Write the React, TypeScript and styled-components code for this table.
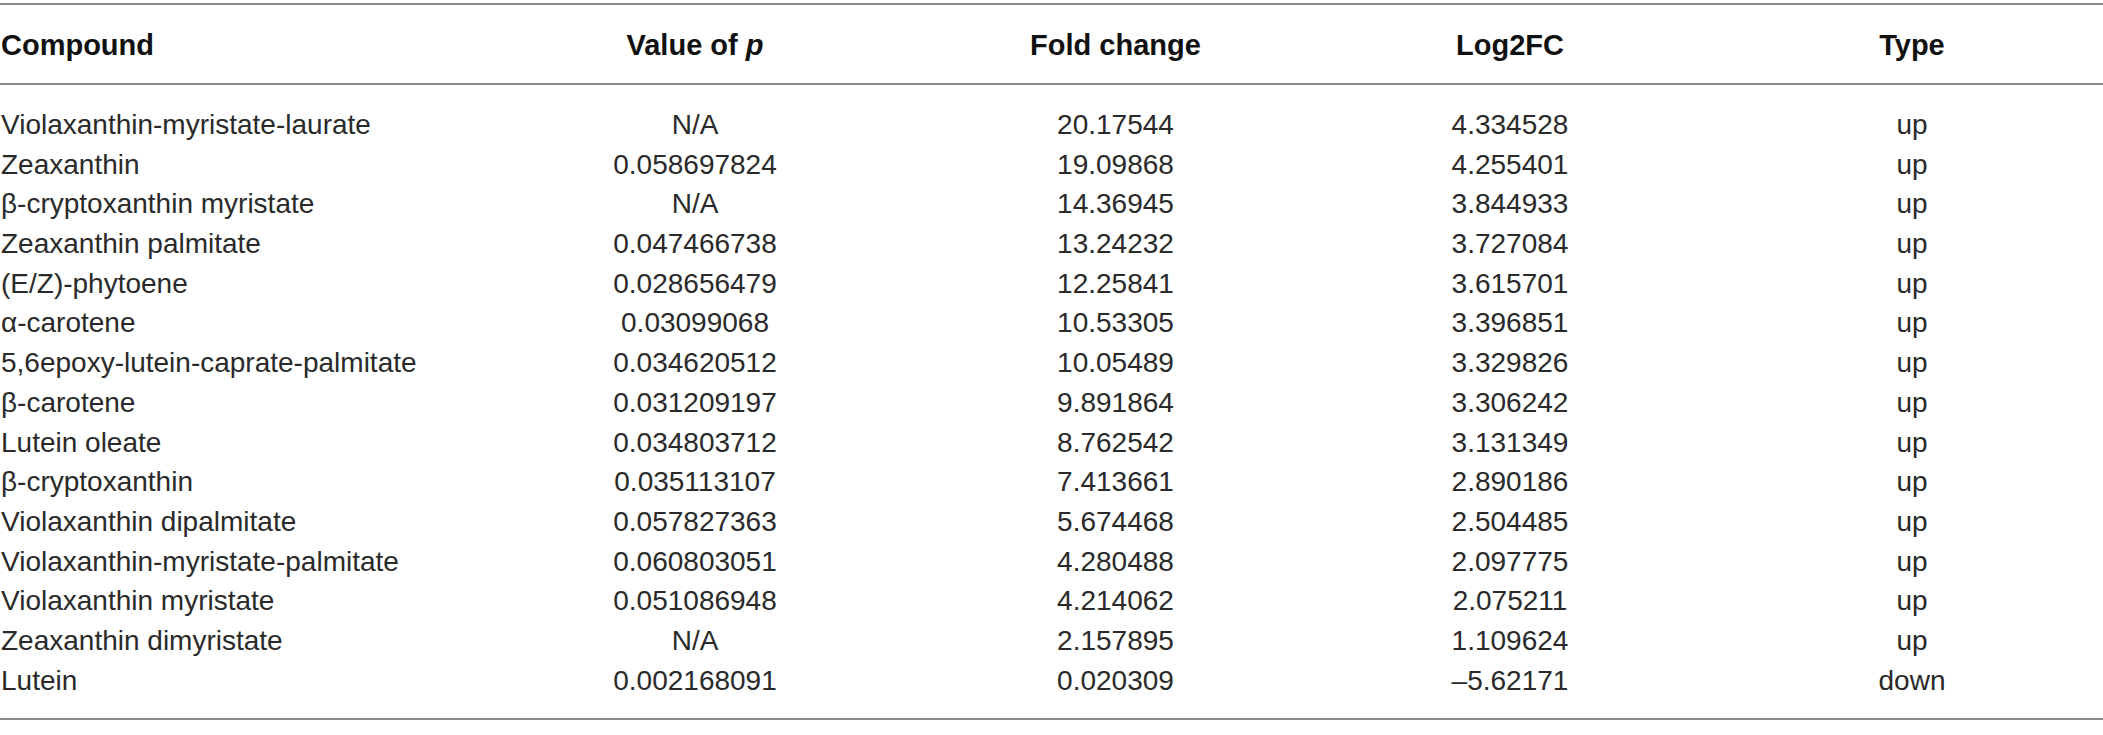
import React from "react";
import styled, { createGlobalStyle } from "styled-components";

const GlobalStyle = createGlobalStyle`
  html, body {
    margin: 0;
    padding: 0;
    background: #ffffff;
  }
  body {
    font-family: "Liberation Sans", Arial, sans-serif;
    color: #1a1a1a;
  }
`;

const Table = styled.div`
  width: 2103px;
  margin-top: 3px;
  border-top: 2px solid #8c8c8c;
  border-bottom: 2px solid #8c8c8c;
  padding-bottom: 17.5px;
`;

const Grid = styled.div`
  display: grid;
  grid-template-columns: 458px 474px 367px 422px 382px;
`;

const HeaderRow = styled(Grid)`
  height: 80px;
  box-sizing: border-box;
  padding-top: 2px;
  align-items: center;
  border-bottom: 2px solid #8c8c8c;
  margin-bottom: 20px;
`;

const HeaderCell = styled.div<{ $left?: boolean }>`
  font-family: "Liberation Sans", Arial, sans-serif;
  font-weight: 700;
  font-size: 29px;
  color: #111;
  text-align: ${(p) => (p.$left ? "left" : "center")};
  padding-left: ${(p) => (p.$left ? "1px" : "0")};
  white-space: nowrap;
`;

const BodyRow = styled(Grid)`
  height: 39.7px;
  align-items: center;
`;

const Cell = styled.div<{ $left?: boolean }>`
  font-family: "Liberation Sans", Arial, sans-serif;
  font-weight: 400;
  font-size: 28px;
  line-height: 39.7px;
  color: #2a2a2a;
  text-align: ${(p) => (p.$left ? "left" : "center")};
  padding-left: ${(p) => (p.$left ? "1px" : "0")};
  white-space: nowrap;
`;

const Italic = styled.i`
  font-style: italic;
`;

type Row = [string, string, string, string, string];

const rows: Row[] = [
  ["Violaxanthin-myristate-laurate", "N/A", "20.17544", "4.334528", "up"],
  ["Zeaxanthin", "0.058697824", "19.09868", "4.255401", "up"],
  ["β-cryptoxanthin myristate", "N/A", "14.36945", "3.844933", "up"],
  ["Zeaxanthin palmitate", "0.047466738", "13.24232", "3.727084", "up"],
  ["(E/Z)-phytoene", "0.028656479", "12.25841", "3.615701", "up"],
  ["α-carotene", "0.03099068", "10.53305", "3.396851", "up"],
  ["5,6epoxy-lutein-caprate-palmitate", "0.034620512", "10.05489", "3.329826", "up"],
  ["β-carotene", "0.031209197", "9.891864", "3.306242", "up"],
  ["Lutein oleate", "0.034803712", "8.762542", "3.131349", "up"],
  ["β-cryptoxanthin", "0.035113107", "7.413661", "2.890186", "up"],
  ["Violaxanthin dipalmitate", "0.057827363", "5.674468", "2.504485", "up"],
  ["Violaxanthin-myristate-palmitate", "0.060803051", "4.280488", "2.097775", "up"],
  ["Violaxanthin myristate", "0.051086948", "4.214062", "2.075211", "up"],
  ["Zeaxanthin dimyristate", "N/A", "2.157895", "1.109624", "up"],
  ["Lutein", "0.002168091", "0.020309", "–5.62171", "down"],
];

export default function App() {
  return (
    <>
      <GlobalStyle />
      <Table>
        <HeaderRow>
          <HeaderCell $left>Compound</HeaderCell>
          <HeaderCell>
            Value of <Italic>p</Italic>
          </HeaderCell>
          <HeaderCell>Fold change</HeaderCell>
          <HeaderCell>Log2FC</HeaderCell>
          <HeaderCell>Type</HeaderCell>
        </HeaderRow>
        {rows.map((r) => (
          <BodyRow key={r[0]}>
            <Cell $left>{r[0]}</Cell>
            <Cell>{r[1]}</Cell>
            <Cell>{r[2]}</Cell>
            <Cell>{r[3]}</Cell>
            <Cell>{r[4]}</Cell>
          </BodyRow>
        ))}
      </Table>
    </>
  );
}
